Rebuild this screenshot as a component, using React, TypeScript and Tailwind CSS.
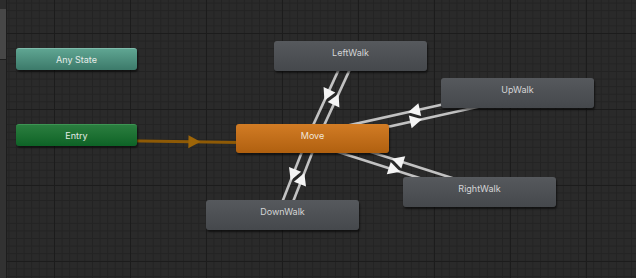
import React from "react";

type P = { x: number; y: number };

const C: Record<string, P> = {
  entry: { x: 76.5, y: 135 },
  move: { x: 312.5, y: 138.5 },
  left: { x: 350.5, y: 56 },
  up: { x: 517.5, y: 93 },
  right: { x: 479.5, y: 192 },
  down: { x: 282.5, y: 215 },
};

function transition(a: P, b: P, off = 5) {
  const vx = b.x - a.x;
  const vy = b.y - a.y;
  const len = Math.hypot(vx, vy);
  const dx = vx / len;
  const dy = vy / len;
  const rx = -dy;
  const ry = dx;
  const a2 = { x: a.x + rx * off, y: a.y + ry * off };
  const b2 = { x: b.x + rx * off, y: b.y + ry * off };
  const m = { x: (a2.x + b2.x) / 2, y: (a2.y + b2.y) / 2 };
  const L = 6;
  const W = 6.5;
  const tip = { x: m.x + dx * L, y: m.y + dy * L };
  const bc = { x: m.x - dx * L, y: m.y - dy * L };
  const p1 = { x: bc.x + rx * W, y: bc.y + ry * W };
  const p2 = { x: bc.x - rx * W, y: bc.y - ry * W };
  return {
    a: a2,
    b: b2,
    tri: `${tip.x},${tip.y} ${p1.x},${p1.y} ${p2.x},${p2.y}`,
  };
}

const whites = [
  transition(C.move, C.left),
  transition(C.left, C.move),
  transition(C.move, C.up),
  transition(C.up, C.move),
  transition(C.move, C.right),
  transition(C.right, C.move),
  transition(C.move, C.down),
  transition(C.down, C.move),
];
const entryT = transition(C.entry, C.move);

const font = { fontFamily: "Inter, 'Noto Sans', sans-serif" };

export default function App() {
  return (
    <div
      className="flex h-[278px] w-[636px] overflow-hidden bg-[#2a2a2a]"
      style={font}
    >
      <div className="flex w-[7px] shrink-0 flex-col border-r border-[#1d1d1d] bg-[#323232]">
        <div className="h-[9px] bg-[#2c2c2c]" />
        <div className="h-[51px] border-b border-[#1e1e1e] bg-[#474747]" />
      </div>
      <div className="relative flex-1 bg-[#2a2a2a] [background-image:linear-gradient(to_right,#1c1c1c_1px,transparent_1px),linear-gradient(to_bottom,#1c1c1c_1px,transparent_1px),linear-gradient(to_right,#232323_1px,transparent_1px),linear-gradient(to_bottom,#232323_1px,transparent_1px)] [background-size:76px_76px,76px_76px,7.6px_7.6px,7.6px_7.6px] [background-position:47px_33px,47px_33px,47px_33px,47px_33px]">
        <svg
          className="absolute inset-0"
          width={629}
          height={278}
          viewBox="0 0 629 278"
        >
          <g transform="translate(-7,0)">
            <line
              x1={entryT.a.x}
              y1={entryT.a.y}
              x2={entryT.b.x}
              y2={entryT.b.y}
              stroke="#8e5a06"
              strokeWidth={3}
            />
            <polygon points={entryT.tri} fill="#9d6508" />
            {whites.map((t, i) => (
              <line
                key={"l" + i}
                x1={t.a.x}
                y1={t.a.y}
                x2={t.b.x}
                y2={t.b.y}
                stroke="#c2c2c2"
                strokeWidth={2.6}
              />
            ))}
            {whites.map((t, i) => (
              <polygon key={"p" + i} points={t.tri} fill="#f4f4f4" />
            ))}
          </g>
        </svg>

        <div className="absolute left-[9px] top-[48px] flex h-[22px] w-[121px] items-center justify-center rounded-[3px] border-t border-[#7fbcac] bg-linear-to-b from-[#5fa592] to-[#3c7a6a] text-[9px] text-[#e6ece9] shadow-[1px_2px_2px_rgba(0,0,0,0.55)]">
          Any State
        </div>
        <div className="absolute left-[9px] top-[124px] flex h-[22px] w-[121px] items-center justify-center rounded-[3px] border-t border-[#3d9453] bg-linear-to-b from-[#2a7e3f] to-[#0d6326] text-[9px] text-[#e3ebe5] shadow-[1px_2px_2px_rgba(0,0,0,0.55)]">
          Entry
        </div>
        <div className="absolute left-[229px] top-[124px] h-[29px] w-[153px] rounded-[3px] bg-linear-to-b from-[#d27c24] to-[#b0600f] pt-[6px] text-center text-[9px] leading-[12px] text-[#f1e6da] shadow-[1px_2px_2px_rgba(0,0,0,0.55)]">
          Move
        </div>
        <div className="absolute left-[267px] top-[41px] h-[30px] w-[153px] rounded-[3px] bg-linear-to-b from-[#56595d] to-[#45484c] pt-[6px] text-center text-[9px] leading-[12px] text-[#d4d5d6] shadow-[1px_2px_2px_rgba(0,0,0,0.55)]">
          LeftWalk
        </div>
        <div className="absolute left-[434px] top-[78px] h-[30px] w-[153px] rounded-[3px] bg-linear-to-b from-[#56595d] to-[#45484c] pt-[6px] text-center text-[9px] leading-[12px] text-[#d4d5d6] shadow-[1px_2px_2px_rgba(0,0,0,0.55)]">
          UpWalk
        </div>
        <div className="absolute left-[396px] top-[177px] h-[30px] w-[153px] rounded-[3px] bg-linear-to-b from-[#56595d] to-[#45484c] pt-[6px] text-center text-[9px] leading-[12px] text-[#d4d5d6] shadow-[1px_2px_2px_rgba(0,0,0,0.55)]">
          RightWalk
        </div>
        <div className="absolute left-[199px] top-[200px] h-[30px] w-[153px] rounded-[3px] bg-linear-to-b from-[#56595d] to-[#45484c] pt-[6px] text-center text-[9px] leading-[12px] text-[#d4d5d6] shadow-[1px_2px_2px_rgba(0,0,0,0.55)]">
          DownWalk
        </div>
      </div>
    </div>
  );
}
